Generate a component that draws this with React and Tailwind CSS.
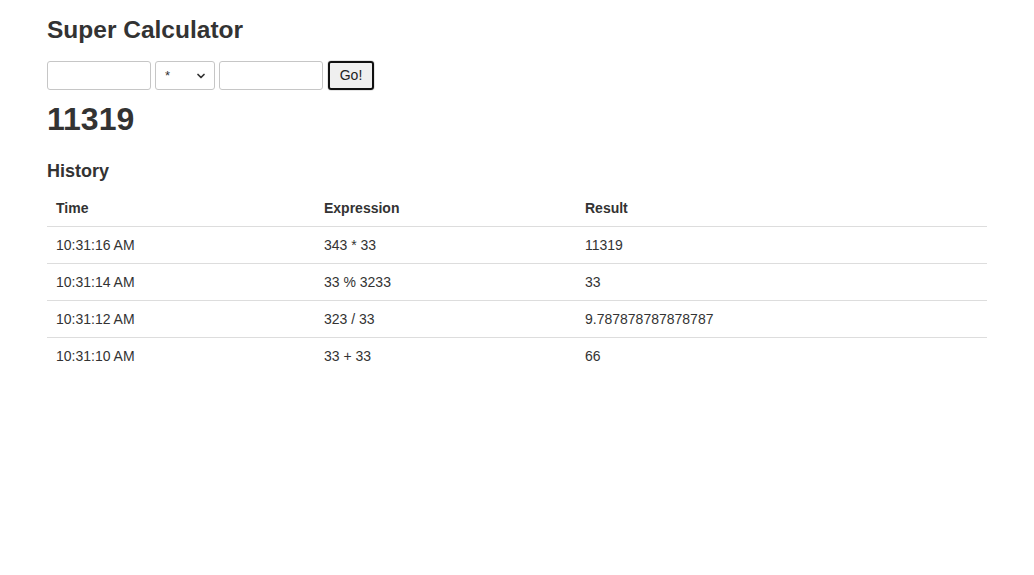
import { ChevronDown } from 'lucide-react'

const history = [
  { time: '10:31:16 AM', expr: '343 * 33', result: '11319' },
  { time: '10:31:14 AM', expr: '33 % 3233', result: '33' },
  { time: '10:31:12 AM', expr: '323 / 33', result: '9.787878787878787' },
  { time: '10:31:10 AM', expr: '33 + 33', result: '66' }
]

export default function App() {
  return (
    <div className="min-h-[575px] bg-white text-[#333] text-[14px] font-['Liberation_Sans',Arial,sans-serif]">
      <div className="w-[940px] mx-auto pt-[17px]">
        <h3 className="text-[24.5px] leading-[26px] font-bold">Super Calculator</h3>

        {/* formulário */}
        <div className="flex items-center gap-1 mt-[17px]">
          <input className="w-[104px] h-[29px] rounded-[3px] border border-[#c6c6c6] px-1 outline-none" />
          <div className="relative w-[60px] h-[29px]">
            <select className="appearance-none w-full h-full rounded-[3px] border border-[#c6c6c6] bg-white pl-[9px] text-[13px] text-[#333] outline-none">
              <option>*</option>
            </select>
            <ChevronDown
              className="absolute right-[8px] top-[9px] w-[12px] h-[12px] text-[#333] pointer-events-none"
              strokeWidth={3.5}
            />
          </div>
          <input className="w-[104px] h-[29px] rounded-[3px] border border-[#c6c6c6] px-1 outline-none" />
          <div className="rounded-[4px] border border-[#e5e5e5]">
            <button className="h-[29px] w-[46px] rounded-[3px] border-2 border-[#101010] bg-[#efefef] text-[14px] text-[#222]">
              Go!
            </button>
          </div>
        </div>

        <h2 className="mt-[12px] text-[32px] leading-[33px] font-bold">11319</h2>

        <h4 className="mt-[25px] text-[18px] leading-[20px] font-bold">History</h4>

        <table className="w-full mt-[9px]">
          <thead>
            <tr>
              <th className="w-[269px] text-left font-bold pl-[9px] pr-2 py-2 leading-5 border-b border-[#ddd]">Time</th>
              <th className="w-[261px] text-left font-bold px-2 py-2 leading-5 border-b border-[#ddd]">Expression</th>
              <th className="text-left font-bold px-2 py-2 leading-5 border-b border-[#ddd]">Result</th>
            </tr>
          </thead>
          <tbody>
            {history.map((row, i) => (
              <tr key={i}>
                <td className={`pl-[9px] pr-2 py-2 leading-5 ${i > 0 ? 'border-t border-[#ddd]' : ''}`}>{row.time}</td>
                <td className={`px-2 py-2 leading-5 ${i > 0 ? 'border-t border-[#ddd]' : ''}`}>{row.expr}</td>
                <td className={`px-2 py-2 leading-5 ${i > 0 ? 'border-t border-[#ddd]' : ''}`}>{row.result}</td>
              </tr>
            ))}
          </tbody>
        </table>
      </div>
    </div>
  )
}
